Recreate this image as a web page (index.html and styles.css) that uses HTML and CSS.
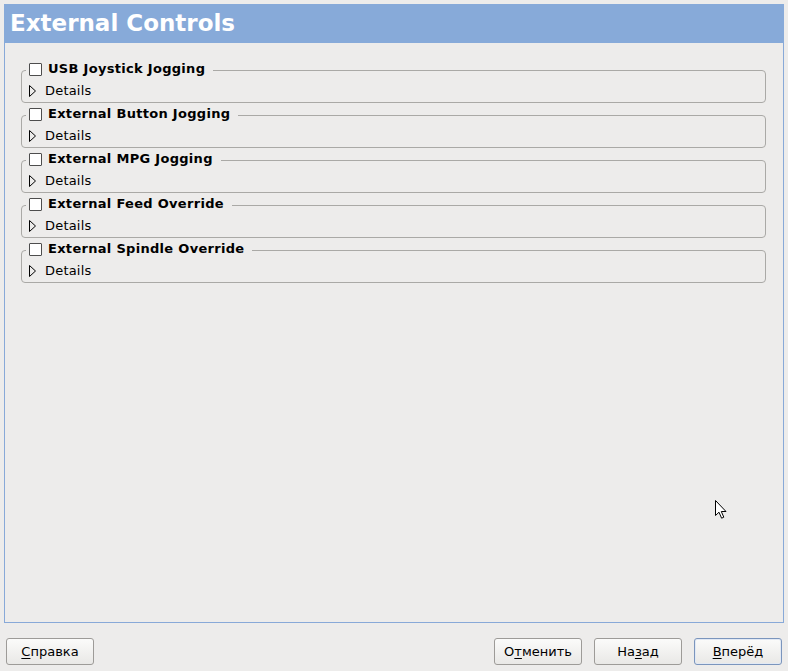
FILE: index.html
```html
<!DOCTYPE html>
<html lang="en">
<head>
<meta charset="utf-8">
<title>External Controls</title>
<link rel="stylesheet" href="styles.css">
</head>
<body>
<div class="window">
  <section class="panel">
    <header class="panel-header">External Controls</header>
    <div class="panel-body">
      <fieldset class="group">
        <legend class="group-legend"><span class="check"></span><span class="group-title">USB Joystick Jogging</span></legend>
        <div class="details"><svg class="expander" width="8" height="12" viewBox="0 0 8 12"><path d="M0.5 0.5 L6.5 6 L0.5 11.5 Z" fill="none" stroke="#000" stroke-width="1"/></svg><span class="details-label">Details</span></div>
      </fieldset>
      <fieldset class="group">
        <legend class="group-legend"><span class="check"></span><span class="group-title">External Button Jogging</span></legend>
        <div class="details"><svg class="expander" width="8" height="12" viewBox="0 0 8 12"><path d="M0.5 0.5 L6.5 6 L0.5 11.5 Z" fill="none" stroke="#000" stroke-width="1"/></svg><span class="details-label">Details</span></div>
      </fieldset>
      <fieldset class="group">
        <legend class="group-legend"><span class="check"></span><span class="group-title">External MPG Jogging</span></legend>
        <div class="details"><svg class="expander" width="8" height="12" viewBox="0 0 8 12"><path d="M0.5 0.5 L6.5 6 L0.5 11.5 Z" fill="none" stroke="#000" stroke-width="1"/></svg><span class="details-label">Details</span></div>
      </fieldset>
      <fieldset class="group">
        <legend class="group-legend"><span class="check"></span><span class="group-title">External Feed Override</span></legend>
        <div class="details"><svg class="expander" width="8" height="12" viewBox="0 0 8 12"><path d="M0.5 0.5 L6.5 6 L0.5 11.5 Z" fill="none" stroke="#000" stroke-width="1"/></svg><span class="details-label">Details</span></div>
      </fieldset>
      <fieldset class="group">
        <legend class="group-legend"><span class="check"></span><span class="group-title">External Spindle Override</span></legend>
        <div class="details"><svg class="expander" width="8" height="12" viewBox="0 0 8 12"><path d="M0.5 0.5 L6.5 6 L0.5 11.5 Z" fill="none" stroke="#000" stroke-width="1"/></svg><span class="details-label">Details</span></div>
      </fieldset>
    </div>
  </section>
  <footer class="buttons">
    <div class="button-group">
      <button class="btn"><u>С</u>правка</button>
    </div>
    <div class="button-group">
      <button class="btn">О<u>т</u>менить</button>
      <button class="btn">На<u>з</u>ад</button>
      <button class="btn btn-default"><u>В</u>перёд</button>
    </div>
  </footer>
  <svg class="cursor" width="13" height="20" viewBox="0 0 13 20" aria-hidden="true">
    <path d="M0.5 0.5 L0.5 15.5 L4 12.2 L6.6 18.2 L8.8 17.2 L6.3 11.5 L11 11.5 Z" fill="#fff" stroke="#000" stroke-width="1" stroke-linejoin="miter"/>
  </svg>
</div>
</body>
</html>
```
FILE: styles.css
```css
* { box-sizing: border-box; }
html, body {
  margin: 0;
  padding: 0;
  background: #edeceb;
}
body {
  font-family: "DejaVu Sans", "Liberation Sans", sans-serif;
  font-size: 13px;
  color: #000;
}
.window {
  position: relative;
  width: 788px;
  height: 671px;
  display: flex;
  flex-direction: column;
}
.panel {
  margin: 4px 4px 0 4px;
  height: 619px;
  border: 1px solid #88a9d8;
  display: flex;
  flex-direction: column;
  background: #edeceb;
}
.panel-header {
  margin: -1px -1px 0 -1px;
  height: 39px;
  background: #87aad9;
  color: #fff;
  font-weight: bold;
  font-size: 23px;
  line-height: 38px;
  padding-left: 6px;
}
.panel-body {
  padding: 19px 17px 0 16px;
  display: flex;
  flex-direction: column;
  gap: 4px;
}
.group {
  margin: 0;
  padding: 0;
  border: 1px solid #aaa9a6;
  border-radius: 4px;
  min-width: 0;
}
.group-legend {
  margin-left: 4px;
  padding: 0 8px 2px 3px;
  display: flex;
  align-items: center;
  height: 16px;
  font-weight: bold;
}
.check {
  width: 13px;
  height: 13px;
  border: 1px solid #4d4d4d;
  background: #fff;
  border-radius: 1px;
  margin-right: 6px;
  flex: none;
}
.group-title {
  line-height: 16px;
  letter-spacing: 0.3px;
}
.details {
  display: flex;
  align-items: center;
  height: 18px;
  margin: 4px 0 2px 0;
  padding-left: 7px;
}
.expander {
  display: block;
  margin-right: 8px;
  flex: none;
}
.details-label {
  line-height: 18px;
  letter-spacing: 0.2px;
}
.buttons {
  display: flex;
  justify-content: space-between;
  padding: 15px 6px 0 6px;
}
.button-group {
  display: flex;
  gap: 12px;
}
.btn {
  width: 88px;
  height: 27px;
  font-family: "DejaVu Sans", "Liberation Sans", sans-serif;
  font-size: 13px;
  color: #000;
  border: 1px solid #9d9b98;
  border-radius: 3px;
  background: linear-gradient(#fbfbfa, #e9e8e6);
  padding: 0;
}
.btn u { text-decoration-thickness: 1px; text-underline-offset: 2px; }
.btn-default {
  border-color: #7b95bd;
  box-shadow: inset 0 0 0 1px #e2e9f4;
}
.cursor {
  position: absolute;
  left: 715px;
  top: 500px;
}
```
